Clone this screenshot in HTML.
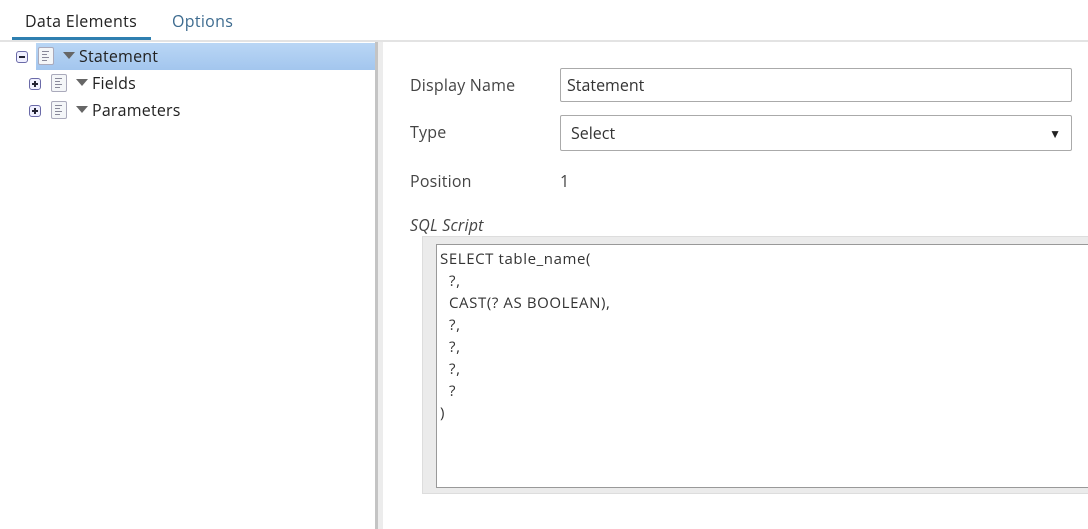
<!DOCTYPE html>
<html><head><style>
body{margin:0;width:1088px;height:529px;background:#fff;font-family:"Open Sans","Liberation Sans",sans-serif;position:relative;overflow:hidden;color:#333}
.a{position:absolute}
.t{font-size:16px;white-space:nowrap;letter-spacing:0.3px}
.tree{font-size:16px;color:#222;letter-spacing:0.2px}
.pm{position:absolute;width:10px;height:10px;border:1px solid #6a6aa8;border-radius:3px;background:#f0f0ff}
.pm:before{content:"";position:absolute;left:2px;top:4px;width:6px;height:2px;background:#223}
.pm.p:after{content:"";position:absolute;left:4px;top:2px;width:2px;height:6px;background:#223}
.doc{position:absolute;width:14px;height:16px;border:1px solid #aab;background:#f4f6f8;border-radius:2px}
.doc i{position:absolute;left:3px;height:1px;background:#889;width:7px}
.tri{position:absolute;width:0;height:0;border-left:6px solid transparent;border-right:6px solid transparent;border-top:7px solid #666}
.lab{position:absolute;font-size:16px;color:#444;letter-spacing:0.2px}
.inp{position:absolute;border:1px solid #aaa;border-radius:2px;background:#fff;font-size:16px;color:#333;box-sizing:border-box}
</style></head><body>
<div class="a t" style="left:25px;top:10px;color:#222">Data Elements</div>
<div class="a t" style="left:172px;top:10px;color:#3d6b8f">Options</div>
<div class="a" style="left:0;top:40px;width:1088px;height:2px;background:#e3e3e3"></div>
<div class="a" style="left:12px;top:37px;width:139px;height:3px;background:#2e7fb0"></div>

<div class="a" style="left:36px;top:43px;width:339px;height:27px;background:linear-gradient(#b9d6f5,#a3c6ee)"></div>
<div class="pm" style="left:16px;top:51px"></div>
<div class="doc" style="left:38px;top:47px"><i style="top:3px"></i><i style="top:6px;width:5px"></i><i style="top:9px"></i><i style="top:12px;width:5px"></i></div>
<div class="tri" style="left:63px;top:52px"></div>
<div class="a tree" style="left:79px;top:45px">Statement</div>

<div class="pm p" style="left:29px;top:78px"></div>
<div class="doc" style="left:51px;top:74px"><i style="top:3px"></i><i style="top:6px;width:5px"></i><i style="top:9px"></i><i style="top:12px;width:5px"></i></div>
<div class="tri" style="left:76px;top:79px"></div>
<div class="a tree" style="left:92px;top:72px">Fields</div>

<div class="pm p" style="left:29px;top:105px"></div>
<div class="doc" style="left:51px;top:101px"><i style="top:3px"></i><i style="top:6px;width:5px"></i><i style="top:9px"></i><i style="top:12px;width:5px"></i></div>
<div class="tri" style="left:76px;top:106px"></div>
<div class="a tree" style="left:92px;top:99px">Parameters</div>

<div class="a" style="left:375px;top:42px;width:3px;height:487px;background:#c4c4c4"></div>
<div class="a" style="left:378px;top:42px;width:5px;height:487px;background:#ececec"></div>

<div class="lab" style="left:410px;top:74px">Display Name</div>
<div class="inp" style="left:560px;top:68px;width:512px;height:34px;padding:5px 0 0 6px">Statement</div>
<div class="lab" style="left:410px;top:121px">Type</div>
<div class="inp" style="left:560px;top:115px;width:512px;height:36px;padding:6px 0 0 10px">Select<span style="position:absolute;right:10px;top:9px;font-size:12px;color:#222">▼</span></div>
<div class="lab" style="left:410px;top:170px">Position</div>
<div class="lab" style="left:560px;top:170px">1</div>
<div class="lab" style="left:410px;top:214px;font-style:italic">SQL Script</div>
<div class="a" style="left:422px;top:236px;width:680px;height:258px;background:#ebebeb;border:1px solid #ddd;box-sizing:border-box"></div>
<div class="a" style="left:436px;top:244px;width:660px;height:244px;background:#fff;border:1px solid #999;box-sizing:border-box;padding:3px 0 0 3px;font-size:15px;letter-spacing:0.6px;line-height:22px;color:#333;white-space:pre">SELECT table_name(
  ?,
  CAST(? AS BOOLEAN),
  ?,
  ?,
  ?,
  ?
)</div>
</body></html>
